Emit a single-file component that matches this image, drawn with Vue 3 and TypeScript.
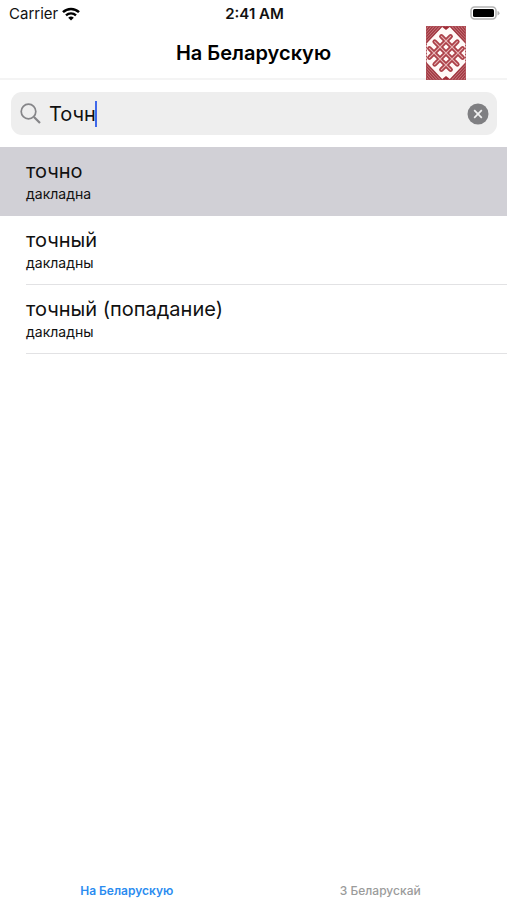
<script setup lang="ts">
import { computed, ref } from 'vue'

interface Entry {
  word: string
  translation: string
}

const query = ref('Точн')
const selected = ref(0)
const activeTab = ref(0)

const tabs: string[] = ['На Беларускую', 'З Беларускай']

const dictionary: Entry[] = [
  { word: 'точно', translation: 'дакладна' },
  { word: 'точный', translation: 'дакладны' },
  { word: 'точный (попадание)', translation: 'дакладны' },
]

const entries = computed(() =>
  dictionary.filter((e) => e.word.startsWith(query.value.trim().toLowerCase())),
)

// Diagonal stripes that fill each corner of the ornament
const corners: string[] = [0, 3, 6, 9, 12, 15]
  .map((d) => `M0 ${17 - d}L${16 - d} 0`)

// Strands of the woven knot, in coordinates turned by 45 degrees
const knot = 'M-8.5 -15V15M0 -16V16M8.5 -15V15M-15 -8.5H15M-16 0H16M-15 8.5H15'
</script>

<template>
  <div class="app">
    <div class="status">
      <div class="carrier">
        <span>Carrier</span>
        <svg width="18" height="14" viewBox="0 0 18 14" aria-hidden="true">
          <path d="M1 5.2a11.4 11.4 0 0 1 16 0" fill="none" stroke="#000" stroke-width="2.5" />
          <path d="M4 8.4a7.2 7.2 0 0 1 10 0" fill="none" stroke="#000" stroke-width="2.3" />
          <path d="M9 13.6 6.2 10.8a4 4 0 0 1 5.6 0z" />
        </svg>
      </div>
      <span class="time">2:41 AM</span>
      <svg class="battery" width="30" height="14" viewBox="0 0 30 14" aria-hidden="true">
        <rect x="1" y="1" width="25" height="12" rx="3.5" fill="#fff" stroke="#b4b4b4" stroke-width="1.5" />
        <rect x="3" y="3" width="21" height="8" rx="1.5" />
        <path d="M27.5 5v4.4q2-.6 2-2.2t-2-2.2z" fill="#b4b4b4" />
      </svg>
    </div>

    <header class="header">
      <h1>{{ tabs[activeTab] }}</h1>
      <svg class="ornament" width="40" height="54" viewBox="0 0 40 54" aria-hidden="true">
        <rect width="40" height="54" fill="#fff8f6" />
        <path d="M0 0H17L0 18zM40 0H23L40 18zM0 54H17L0 36zM40 54H23L40 36z" fill="#cb7e84" />
        <g fill="none" stroke="#a03740" stroke-width="1.3">
          <path v-for="d in corners" :key="d" :d="d" />
          <path v-for="d in corners" :key="d" :d="d" transform="translate(40 0) scale(-1 1)" />
          <path v-for="d in corners" :key="d" :d="d" transform="translate(0 54) scale(1 -1)" />
          <path v-for="d in corners" :key="d" :d="d" transform="translate(40 54) scale(-1 -1)" />
        </g>
        <path d="M15 0h10l-5 4zM15 54h10l-5-4z" fill="#a02c36" />
        <g transform="translate(20 27) rotate(45)" fill="none" stroke-linecap="round">
          <path :d="knot" stroke="#ac4048" stroke-width="4.6" />
          <path :d="knot" stroke="#e6b4b5" stroke-width="1.2" />
        </g>
        <rect x=".5" y=".5" width="39" height="53" fill="none" stroke="#b0525a" stroke-dasharray="2 1" />
      </svg>
    </header>

    <main class="main">
      <div class="search">
        <label class="field">
          <svg width="22" height="22" viewBox="0 0 22 22" fill="none" stroke="#858588" aria-hidden="true">
            <circle cx="8.5" cy="8.5" r="7.3" stroke-width="1.7" />
            <path d="m14 14 6 6" stroke-width="2.2" />
          </svg>
          <span class="entry">
            <input v-model="query" type="text" aria-label="Search" autocomplete="off" spellcheck="false" />
            <span class="caret"></span>
          </span>
          <button class="clear" type="button" aria-label="Clear" @click="query = ''">
            <svg width="22" height="22" viewBox="0 0 22 22" aria-hidden="true">
              <circle cx="11" cy="11" r="10.5" fill="#7f7f82" />
              <path d="m7.2 7.2 7.6 7.6m0-7.6-7.6 7.6" stroke="#f2f2f2" stroke-width="1.7" />
            </svg>
          </button>
        </label>
      </div>

      <ul class="results">
        <li v-for="(entry, i) in entries" :key="entry.word">
          <button type="button" class="row" :class="{ selected: i === selected }" @click="selected = i">
            <span class="content">
              <span class="word">{{ entry.word }}</span>
              <span class="translation">{{ entry.translation }}</span>
            </span>
          </button>
        </li>
      </ul>
    </main>

    <nav class="tabs">
      <button
        v-for="(tab, i) in tabs"
        :key="tab"
        type="button"
        :class="{ active: i === activeTab }"
        @click="activeTab = i"
      >
        {{ tab }}
      </button>
    </nav>
  </div>
</template>

<style>
body {
  background: #fff;
}
</style>

<style scoped>
.app {
  display: flex;
  flex-direction: column;
  min-height: 100vh;
  font-family: Inter, "Noto Sans", sans-serif;
  color: #111;
}

button {
  border: 0;
  padding: 0;
  background: none;
  font: inherit;
  color: inherit;
}

.status {
  display: grid;
  grid-template-columns: 1fr auto 1fr;
  align-items: center;
  height: 28px;
  padding: 0 7px 0 9px;
  font-size: 15px;
  line-height: 28px;
}

.carrier {
  display: flex;
  align-items: center;
  gap: 4px;
}

.time {
  font-weight: 600;
}

.battery {
  justify-self: end;
  align-self: start;
  margin-top: 6px;
}

.header {
  display: grid;
  grid-template-columns: 1fr auto 1fr;
  grid-template-rows: 50px;
  align-items: center;
  border-bottom: 2px solid #f4f4f4;
}

h1 {
  grid-column: 2;
  margin: 0;
  font-size: 20px;
  font-weight: 600;
  line-height: 24px;
  color: #000;
}

.ornament {
  justify-self: end;
  margin-right: 41px;
}

.main {
  flex: 1;
}

.search {
  padding: 12px 10px 12px 11px;
}

.field {
  display: flex;
  align-items: center;
  gap: 7px;
  height: 43px;
  padding: 0 8px 0 9px;
  border-radius: 11px;
  background: #eee;
  cursor: text;
}

.entry {
  display: flex;
  flex: 1;
  align-items: center;
  min-width: 0;
}

input {
  field-sizing: content;
  min-width: 0;
  max-width: 100%;
  padding: 0;
  border: 0;
  outline: 0;
  background: none;
  font: inherit;
  font-size: 20px;
  line-height: 26px;
  color: #111;
  caret-color: transparent;
}

.caret {
  flex: none;
  width: 2px;
  height: 26px;
  margin-left: -1px;
  background: #3f68ea;
}

.clear {
  display: flex;
}

.results {
  margin: 0;
  padding: 0;
  list-style: none;
}

.row {
  display: block;
  width: 100%;
  height: 69px;
  padding-left: 26px;
  text-align: left;
}

.content {
  display: flex;
  flex-direction: column;
  justify-content: center;
  box-sizing: border-box;
  height: 100%;
  border-bottom: 1px solid #e2e2e4;
}

.selected {
  background: #d1d0d6;
}

.selected .content {
  border-color: transparent;
}

.word {
  font-size: 20px;
  line-height: 26px;
}

.translation {
  font-size: 14px;
  line-height: 20px;
}

.tabs {
  display: grid;
  grid-template-columns: 1fr 1fr;
  height: 18px;
}

.tabs button {
  height: 18px;
  font-size: 12px;
  font-weight: 500;
  line-height: 18px;
  color: #9b9b9b;
}

.tabs .active {
  font-weight: 600;
  color: #2b8cf0;
}
</style>
